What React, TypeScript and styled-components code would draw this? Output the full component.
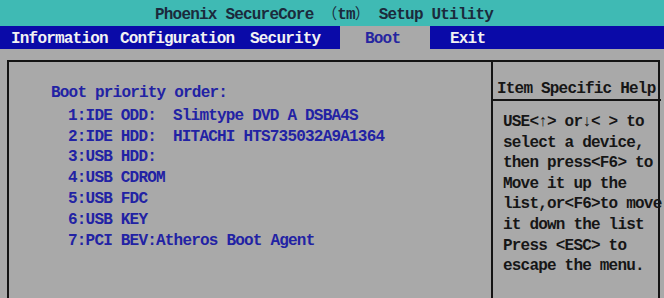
import React from "react";
import styled, { createGlobalStyle } from "styled-components";

const GlobalStyle = createGlobalStyle`
  body {
    margin: 0;
    background-color: #a9a9a9;
  }
`;

const ScreenWrapper = styled.div`
  width: 664px;
  height: 298px;
  overflow: hidden;
  display: flex;
  flex-direction: column;
  background-color: #a9a9a9;
  font-family: "Liberation Mono", "Noto Sans CJK SC", monospace;
  font-size: 16px;
  letter-spacing: -0.8px;
  font-weight: 700;
`;

const TitleBarWrapper = styled.div`
  height: 26px;
  line-height: 25px;
  padding-left: 155px;
  background-color: #3fbab4;
  color: #1b2a3c;
  white-space: pre;
`;

const Paren = styled.span`
  font-family: "Noto Sans CJK SC", sans-serif;
  font-weight: 400;
  letter-spacing: 0;
  font-size: 15px;
`;

const MenuBarWrapper = styled.div`
  height: 23px;
  display: flex;
  padding-left: 5px;
  background-color: #0a0aa8;
`;

const MenuItemWrapper = styled.div<{ $active?: boolean; $width: number; $pad: number }>`
  width: ${(p) => p.$width}px;
  box-sizing: border-box;
  padding: 3px 0 0 ${(p) => p.$pad}px;
  line-height: 20px;
  white-space: pre;
  color: ${(p) => (p.$active ? "#2626a0" : "#f2f2f2")};
  background-color: ${(p) => (p.$active ? "#a9a9a9" : "transparent")};
`;

const FrameWrapper = styled.div`
  margin: 11px 0 0 7px;
  width: 649px;
  height: 250px;
  flex-shrink: 0;
  border: 2px solid #141414;
  display: grid;
  grid-template-columns: 484px 1fr;
`;

const BootPanelWrapper = styled.div`
  padding: 21px 0 0 42px;
  border-right: 2px solid #141414;
  color: #2222a4;
  line-height: 20.8px;
`;

const PanelTitleWrapper = styled.div`
  margin-bottom: 2px;
`;

const BootListWrapper = styled.div`
  padding-left: 17px;
  display: grid;
  grid-template-columns: 105px 1fr;
`;

const BootCellWrapper = styled.div<{ $span?: boolean }>`
  white-space: pre;
  grid-column: ${(p) => (p.$span ? "1 / 3" : "auto")};
`;

const HelpPanelWrapper = styled.div`
  display: flex;
  flex-direction: column;
  color: #161616;
  line-height: 20.6px;
`;

const HelpHeaderWrapper = styled.div`
  height: 39px;
  box-sizing: border-box;
  padding: 17px 0 0 4px;
  border-bottom: 2px solid #141414;
  white-space: pre;
`;

const HelpTextWrapper = styled.div`
  padding: 11px 0 0 10px;
  white-space: pre;
`;

const menu = [
  { label: "Information", width: 109, pad: 6 },
  { label: "Configuration", width: 130, pad: 6 },
  { label: "Security", width: 96, pad: 6 },
  { label: "Boot", width: 90, pad: 25, active: true },
  { label: "Exit", width: 80, pad: 20 },
];

const bootOrder: [string, string?][] = [
  ["1:IDE ODD:", "Slimtype DVD A DSBA4S"],
  ["2:IDE HDD:", "HITACHI HTS735032A9A1364"],
  ["3:USB HDD:"],
  ["4:USB CDROM"],
  ["5:USB FDC"],
  ["6:USB KEY"],
  ["7:PCI BEV:Atheros Boot Agent"],
];

const helpLines = [
  "USE<\u2191> or\u2193< > to",
  "select a device,",
  "then press<F6> to",
  "Move it up the",
  "list,or<F6>to move",
  "it down the list",
  "Press <ESC> to",
  "escape the menu.",
];

export default function App() {
  return (
    <>
      <GlobalStyle />
      <ScreenWrapper>
        <TitleBarWrapper>
          Phoenix SecureCore <Paren>（</Paren>tm<Paren>）</Paren> Setup Utility
        </TitleBarWrapper>
        <MenuBarWrapper>
          {menu.map((m) => (
            <MenuItemWrapper key={m.label} $width={m.width} $pad={m.pad} $active={m.active}>
              {m.label}
            </MenuItemWrapper>
          ))}
        </MenuBarWrapper>
        <FrameWrapper>
          <BootPanelWrapper>
            <PanelTitleWrapper>Boot priority order:</PanelTitleWrapper>
            <BootListWrapper>
              {bootOrder.map(([label, device]) =>
                device ? (
                  <React.Fragment key={label}>
                    <BootCellWrapper>{label}</BootCellWrapper>
                    <BootCellWrapper>{device}</BootCellWrapper>
                  </React.Fragment>
                ) : (
                  <BootCellWrapper key={label} $span>
                    {label}
                  </BootCellWrapper>
                )
              )}
            </BootListWrapper>
          </BootPanelWrapper>
          <HelpPanelWrapper>
            <HelpHeaderWrapper>Item Specific Help</HelpHeaderWrapper>
            <HelpTextWrapper>
              {helpLines.map((line) => (
                <div key={line}>{line}</div>
              ))}
            </HelpTextWrapper>
          </HelpPanelWrapper>
        </FrameWrapper>
      </ScreenWrapper>
    </>
  );
}
